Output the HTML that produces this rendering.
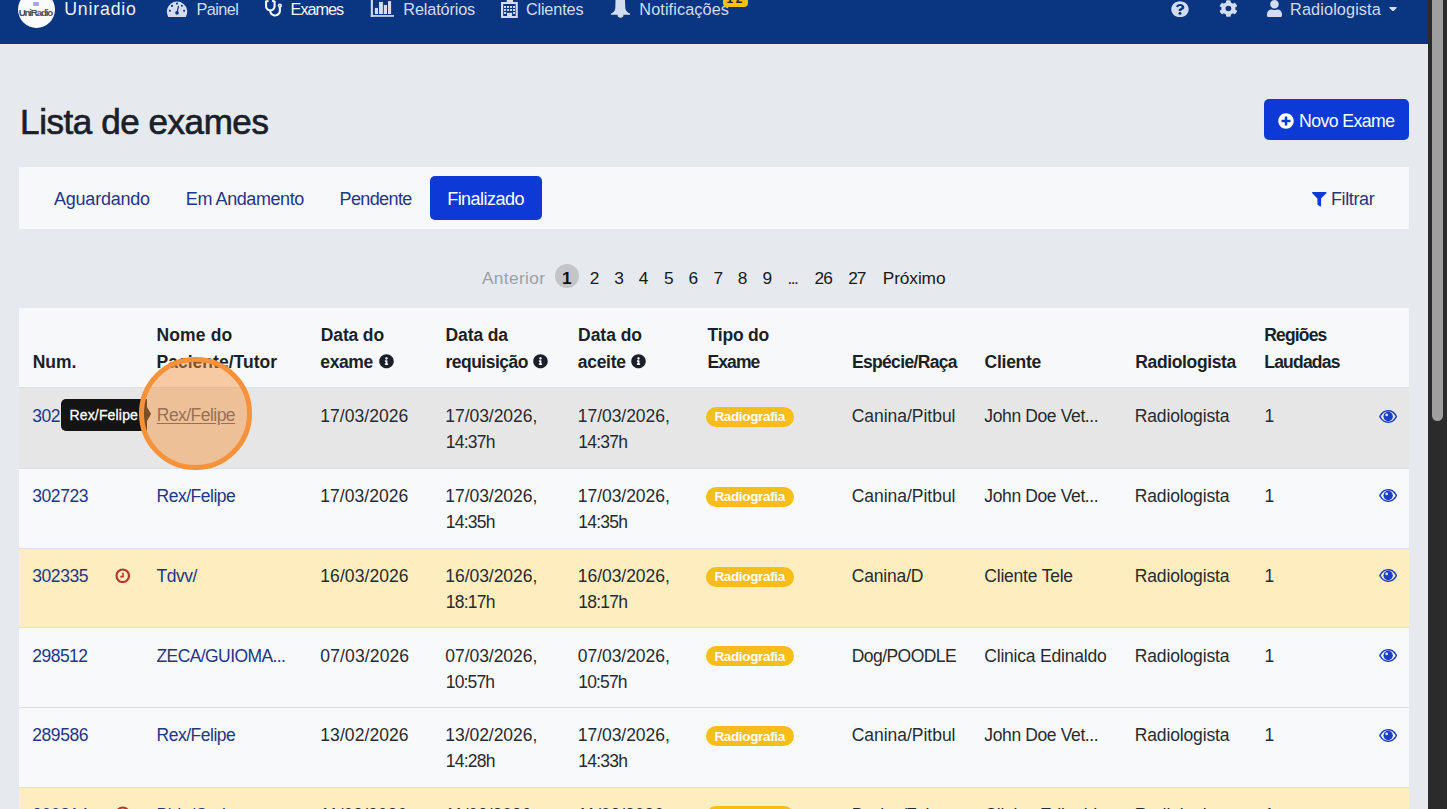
<!DOCTYPE html>
<html><head><meta charset="utf-8"><title>Lista de exames</title>
<style>
html,body{margin:0;padding:0;}
body{width:1447px;height:809px;overflow:hidden;position:relative;background:#e6e9ee;font-family:"Liberation Sans",sans-serif;}
.t{position:absolute;white-space:nowrap;}
.i{position:absolute;display:block;}
</style></head><body>
<div style="position:absolute;left:0;top:0;width:1428px;height:43.5px;background:#0a3580"></div>
<div style="position:absolute;left:18px;top:-9px;width:37px;height:37px;border-radius:50%;background:#fafbfc"></div>
<div style="position:absolute;left:33px;top:2px;width:5.5px;height:4.3px;border-radius:1px;background:#a5a8e6"></div>
<div class="t" style="left:18.70px;top:6.40px;font-size:9.8px;line-height:13px;color:#4d4d4d;letter-spacing:-1.202px;font-weight:700;">UniRadio</div>
<div class="t" style="left:64.20px;top:-1.63px;font-size:17.7px;line-height:23px;color:#eef2fa;letter-spacing:0.841px;">Uniradio</div>
<svg class="i" style="left:160px;top:0;width:35px;height:22px" viewBox="160 0 35 22"><path fill="#d3dcf0" d="M168.3,16.9 A10.2,10.2 0 1 1 185.8,16.9 Z"/><g fill="#0a3580"><circle cx="177" cy="3.6" r="1.05"/><circle cx="172" cy="5.9" r="1.05"/><circle cx="181.9" cy="5.8" r="1.05"/><circle cx="169.9" cy="10.7" r="1.05"/><circle cx="184.1" cy="10.7" r="1.05"/><circle cx="177" cy="12.9" r="1.8"/></g><path d="M177,12.9 L178.5,6.3" stroke="#0a3580" stroke-width="1.2" stroke-linecap="round"/></svg>
<div class="t" style="left:196.50px;top:-1.25px;font-size:16.3px;line-height:21px;color:#d3dcf0;letter-spacing:-0.603px;">Painel</div>
<svg class="i" style="left:265px;top:0px;width:17px;height:16.5px" viewBox="0 0 512 512" preserveAspectRatio="none"><path fill="#f4f6fb" d="M447.1 112c-34.2.5-62.3 28.4-63 62.6-.5 24.3 12.5 45.6 32 56.8V344c0 57.3-50.2 104-112 104-60 0-109.2-44.1-111.9-99.2C265 333.8 320 269.2 320 192V36.6c0-11.4-8.1-21.3-19.3-23.5L237.8.5c-13-2.6-25.6 5.8-28.2 18.8L206.4 35c-2.6 13 5.8 25.6 18.8 28.2l30.7 6.1v121.4c0 52.9-42.2 96.7-95.1 97.2-53.4.5-96.9-42.7-96.9-96V69.4l30.7-6.1c13-2.6 21.4-15.2 18.8-28.2l-3.1-15.7C107.7 6.4 95.1-2 82.1.6L19.3 13C8.1 15.3 0 25.1 0 36.6V192c0 77.3 55.1 142 128.1 156.8C130.7 439.2 208.6 512 304 512c97 0 176-75.4 176-168V231.4c19.1-11.1 32-31.7 32-55.4 0-35.7-29.2-64.5-64.9-64zm.9 80c-8.8 0-16-7.2-16-16s7.2-16 16-16 16 7.2 16 16-7.2 16-16 16z"/></svg>
<div class="t" style="left:290.60px;top:-1.25px;font-size:16.3px;line-height:21px;color:#f4f6fb;letter-spacing:-1.035px;">Exames</div>
<svg class="i" style="left:365px;top:0;width:35px;height:22px" viewBox="365 0 35 22"><g fill="#d3dcf0"><rect x="370.8" y="-1" width="2.1" height="17.8"/><rect x="370.8" y="15.1" width="23.1" height="1.7"/><rect x="374.9" y="7.9" width="3.1" height="6.1"/><rect x="379" y="1.9" width="3.9" height="12.1"/><rect x="383.8" y="5" width="3.2" height="9"/><rect x="388" y="1.1" width="3.1" height="12.9"/></g></svg>
<div class="t" style="left:403.30px;top:-1.25px;font-size:16.3px;line-height:21px;color:#d3dcf0;letter-spacing:-0.154px;">Relatórios</div>
<svg class="i" style="left:495px;top:0;width:30px;height:22px" viewBox="495 0 30 22"><g fill="#d3dcf0"><path fill-rule="evenodd" d="M501,1.9 H517.8 V18.1 H501 Z M503.2,4.1 V16 H515.7 V4.1 Z"/><rect x="506.7" y="-1" width="6.3" height="4.5"/><rect x="504" y="6" width="2.1" height="1.9"/><rect x="507" y="6" width="2.1" height="1.9"/><rect x="510" y="6" width="2.1" height="1.9"/><rect x="513" y="6" width="2.1" height="1.9"/><rect x="504" y="9" width="2.1" height="1.9"/><rect x="507" y="9" width="2.1" height="1.9"/><rect x="510" y="9" width="2.1" height="1.9"/><rect x="513" y="9" width="2.1" height="1.9"/><rect x="504" y="12" width="2.1" height="1.9"/><rect x="513" y="12" width="2.1" height="1.9"/><rect x="507" y="12.8" width="5.1" height="3.3"/></g></svg>
<div class="t" style="left:525.90px;top:-1.25px;font-size:16.3px;line-height:21px;color:#d3dcf0;letter-spacing:-0.170px;">Clientes</div>
<svg class="i" style="left:605px;top:0;width:35px;height:22px" viewBox="605 0 35 22"><path fill="#d3dcf0" d="M615.6,-2 H624.9 L625.3,8 C625.6,11 627.6,12.6 630,13.6 V14.7 H611 V13.6 C613.4,12.6 615.1,11 615.3,8 Z M617.5,14.7 H623.5 A3,3 0 0 1 617.5,14.7 Z"/></svg>
<div class="t" style="left:639.30px;top:-1.25px;font-size:16.3px;line-height:21px;color:#d3dcf0;letter-spacing:0.092px;">Notificações</div>
<div style="position:absolute;left:723px;top:-11px;width:24.5px;height:18px;border-radius:4px;background:#fcc10f"></div>
<div class="t" style="left:726.50px;top:-8.66px;font-size:12px;line-height:16px;color:#212529;letter-spacing:2.456px;font-weight:700;">12</div>
<svg class="i" style="left:1170.8px;top:0.5px;width:18px;height:16.5px" viewBox="0 0 512 512" preserveAspectRatio="none"><path fill="#d3dcf0" d="M504 256c0 136.997-111.043 248-248 248S8 392.997 8 256C8 119.083 119.043 8 256 8s248 111.083 248 248zM262.655 90c-54.497 0-89.255 22.957-116.549 63.758-3.536 5.286-2.353 12.415 2.715 16.258l34.699 26.31c5.205 3.947 12.621 3.008 16.665-2.122 17.864-22.658 30.113-35.797 57.303-35.797 20.429 0 45.698 13.148 45.698 32.958 0 14.976-12.363 22.667-32.534 33.976C247.128 238.528 216 254.941 216 296v4c0 6.627 5.373 12 12 12h56c6.627 0 12-5.373 12-12v-1.333c0-28.462 83.186-29.647 83.186-106.667 0-58.002-60.165-102-116.531-102zM256 338c-25.365 0-46 20.635-46 46 0 25.364 20.635 46 46 46s46-20.636 46-46c0-25.365-20.635-46-46-46z"/></svg>
<svg class="i" style="left:1218.6px;top:0px;width:18.8px;height:17px" viewBox="0 0 512 512" preserveAspectRatio="none"><path fill="#d3dcf0" d="M487.4 315.7l-42.6-24.6c4.3-23.2 4.3-47 0-70.2l42.6-24.6c4.9-2.8 7.1-8.6 5.5-14-11.1-35.6-30-67.8-54.7-94.6-3.8-4.1-10-5.1-14.8-2.3L380.8 110c-17.9-15.4-38.5-27.3-60.8-35.1V25.8c0-5.6-3.9-10.5-9.4-11.7-36.7-8.2-74.3-7.8-109.2 0-5.500 1.2-9.4 6.1-9.4 11.7V75c-22.2 7.9-42.8 19.8-60.8 35.1L88.7 85.5c-4.9-2.8-11-1.9-14.8 2.3-24.7 26.7-43.6 58.9-54.7 94.6-1.7 5.4.6 11.2 5.5 14L67.3 221c-4.3 23.2-4.3 47 0 70.2l-42.6 24.6c-4.9 2.8-7.1 8.6-5.5 14 11.1 35.6 30 67.8 54.7 94.6 3.8 4.1 10 5.1 14.8 2.3l42.6-24.6c17.9 15.4 38.5 27.3 60.8 35.1v49.2c0 5.6 3.9 10.5 9.4 11.7 36.7 8.2 74.3 7.8 109.2 0 5.5-1.2 9.4-6.1 9.4-11.7v-49.2c22.2-7.9 42.8-19.8 60.8-35.1l42.6 24.6c4.9 2.8 11 1.9 14.8-2.3 24.7-26.7 43.6-58.9 54.7-94.6 1.5-5.5-.7-11.3-5.6-14.1zM256 336c-44.1 0-80-35.9-80-80s35.9-80 80-80 80 35.9 80 80-35.9 80-80 80z"/></svg>
<svg class="i" style="left:1266.5px;top:0px;width:15px;height:17px" viewBox="0 0 448 512" preserveAspectRatio="none"><path fill="#d3dcf0" d="M224 256c70.7 0 128-57.3 128-128S294.7 0 224 0 96 57.3 96 128s57.3 128 128 128zm89.6 32h-16.7c-22.2 10.2-46.9 16-72.9 16s-50.6-5.8-72.9-16h-16.7C60.2 288 0 348.2 0 422.4V464c0 26.5 21.5 48 48 48h352c26.5 0 48-21.5 48-48v-41.6c0-74.2-60.2-134.4-134.4-134.4z"/></svg>
<div class="t" style="left:1290.10px;top:-1.25px;font-size:16.3px;line-height:21px;color:#d3dcf0;letter-spacing:0.099px;">Radiologista</div>
<svg class="i" style="left:1389px;top:6.5px;width:8px;height:4.5px" viewBox="0 192 320 172" preserveAspectRatio="none"><path fill="#d3dcf0" d="M31.3 192h257.3c17.8 0 26.7 21.5 14.1 34.1L174.1 354.8c-7.8 7.8-20.5 7.8-28.3 0L17.2 226.1C4.6 213.5 13.5 192 31.3 192z"/></svg>
<div class="t" style="left:20.10px;top:98.87px;font-size:35px;line-height:46px;color:#1b1f2a;letter-spacing:-0.434px;-webkit-text-stroke:0.7px #1b1f2a;">Lista de exames</div>
<div style="position:absolute;left:1264px;top:99px;width:145px;height:41px;border-radius:5px;background:#0d3ad4"></div>
<svg class="i" style="left:1278px;top:112.5px;width:16px;height:16px" viewBox="0 0 512 512" preserveAspectRatio="none"><path fill="#ffffff" d="M256 8C119 8 8 119 8 256s111 248 248 248 248-111 248-248S393 8 256 8zm144 276c0 6.6-5.4 12-12 12h-92v92c0 6.6-5.4 12-12 12h-56c-6.6 0-12-5.4-12-12v-92h-92c-6.6 0-12-5.4-12-12v-56c0-6.6 5.4-12 12-12h92v-92c0-6.6 5.4-12 12-12h56c6.6 0 12 5.4 12 12v92h92c6.6 0 12 5.4 12 12v56z"/></svg>
<div class="t" style="left:1299.00px;top:110.17px;font-size:17.7px;line-height:23px;color:#ffffff;letter-spacing:-0.581px;">Novo Exame</div>
<div style="position:absolute;left:19px;top:167px;width:1390px;height:61.5px;background:#f7f8fa"></div>
<div class="t" style="left:54.00px;top:188.06px;font-size:18px;line-height:23px;color:#1e3687;letter-spacing:-0.220px;">Aguardando</div>
<div class="t" style="left:185.80px;top:188.06px;font-size:18px;line-height:23px;color:#1e3687;letter-spacing:-0.415px;">Em Andamento</div>
<div class="t" style="left:339.50px;top:188.06px;font-size:18px;line-height:23px;color:#1e3687;letter-spacing:-0.611px;">Pendente</div>
<div style="position:absolute;left:430px;top:176px;width:112px;height:43.5px;border-radius:5px;background:#0d3ad4"></div>
<div class="t" style="left:447.20px;top:188.06px;font-size:18px;line-height:23px;color:#ffffff;letter-spacing:-0.538px;">Finalizado</div>
<svg class="i" style="left:1312px;top:192px;width:14.5px;height:14.5px" viewBox="0 0 512 512" preserveAspectRatio="none"><path fill="#0d3ad4" d="M487.976 0H24.028C2.71 0-8.047 25.866 7.058 40.971L192 225.941V432c0 7.831 3.821 15.17 10.237 19.662l80 55.98C298.02 518.69 320 507.493 320 487.98V225.941l184.947-184.97C520.021 25.896 509.338 0 487.976 0z"/></svg>
<div class="t" style="left:1331.00px;top:188.06px;font-size:18px;line-height:23px;color:#1e3687;letter-spacing:-0.382px;">Filtrar</div>
<div class="t" style="left:482.00px;top:267.01px;font-size:17.3px;line-height:22px;color:#9aa0a8;letter-spacing:0.345px;">Anterior</div>
<div style="position:absolute;left:555px;top:264px;width:24px;height:24px;border-radius:50%;background:#c3c5c9"></div>
<div class="t" style="left:562.00px;top:267.01px;font-size:17.3px;line-height:22px;color:#111;letter-spacing:-0.350px;font-weight:700;">1</div>
<div class="t" style="left:589.80px;top:267.01px;font-size:17.3px;line-height:22px;color:#15191f;letter-spacing:-0.350px;">2</div>
<div class="t" style="left:614.30px;top:267.01px;font-size:17.3px;line-height:22px;color:#15191f;letter-spacing:-0.350px;">3</div>
<div class="t" style="left:638.70px;top:267.01px;font-size:17.3px;line-height:22px;color:#15191f;letter-spacing:-0.350px;">4</div>
<div class="t" style="left:664.10px;top:267.01px;font-size:17.3px;line-height:22px;color:#15191f;letter-spacing:-0.350px;">5</div>
<div class="t" style="left:688.50px;top:267.01px;font-size:17.3px;line-height:22px;color:#15191f;letter-spacing:-0.350px;">6</div>
<div class="t" style="left:713.50px;top:267.01px;font-size:17.3px;line-height:22px;color:#15191f;letter-spacing:-0.350px;">7</div>
<div class="t" style="left:737.80px;top:267.01px;font-size:17.3px;line-height:22px;color:#15191f;letter-spacing:-0.350px;">8</div>
<div class="t" style="left:762.40px;top:267.01px;font-size:17.3px;line-height:22px;color:#15191f;letter-spacing:-0.350px;">9</div>
<div class="t" style="left:787.50px;top:267.01px;font-size:17.3px;line-height:22px;color:#15191f;letter-spacing:-1.555px;">...</div>
<div class="t" style="left:814.50px;top:267.01px;font-size:17.3px;line-height:22px;color:#15191f;letter-spacing:-0.838px;">26</div>
<div class="t" style="left:848.30px;top:267.01px;font-size:17.3px;line-height:22px;color:#15191f;letter-spacing:-1.038px;">27</div>
<div class="t" style="left:882.80px;top:267.01px;font-size:17.3px;line-height:22px;color:#15191f;letter-spacing:-0.109px;">Próximo</div>
<div style="position:absolute;left:19px;top:307.5px;width:1390px;height:79.7px;background:#f7f8fa"></div>
<div class="t" style="left:32.70px;top:350.64px;font-size:17.5px;line-height:23px;color:#1b1f28;letter-spacing:-0.017px;font-weight:700;">Num.</div>
<div class="t" style="left:156.50px;top:324.14px;font-size:17.5px;line-height:23px;color:#1b1f28;letter-spacing:0.139px;font-weight:700;">Nome do</div>
<div class="t" style="left:156.50px;top:350.64px;font-size:17.5px;line-height:23px;color:#1b1f28;letter-spacing:0.026px;font-weight:700;">Paciente/Tutor</div>
<div class="t" style="left:320.80px;top:324.14px;font-size:17.5px;line-height:23px;color:#1b1f28;letter-spacing:-0.145px;font-weight:700;">Data do</div>
<div class="t" style="left:320.30px;top:350.64px;font-size:17.5px;line-height:23px;color:#1b1f28;letter-spacing:-0.374px;font-weight:700;">exame</div>
<div class="t" style="left:445.50px;top:324.14px;font-size:17.5px;line-height:23px;color:#1b1f28;letter-spacing:-0.105px;font-weight:700;">Data da</div>
<div class="t" style="left:445.50px;top:350.64px;font-size:17.5px;line-height:23px;color:#1b1f28;letter-spacing:-0.515px;font-weight:700;">requisição</div>
<div class="t" style="left:578.10px;top:324.14px;font-size:17.5px;line-height:23px;color:#1b1f28;letter-spacing:-0.045px;font-weight:700;">Data do</div>
<div class="t" style="left:577.80px;top:350.64px;font-size:17.5px;line-height:23px;color:#1b1f28;letter-spacing:-0.302px;font-weight:700;">aceite</div>
<div class="t" style="left:707.50px;top:324.14px;font-size:17.5px;line-height:23px;color:#1b1f28;letter-spacing:-0.177px;font-weight:700;">Tipo do</div>
<div class="t" style="left:707.50px;top:350.64px;font-size:17.5px;line-height:23px;color:#1b1f28;letter-spacing:-0.909px;font-weight:700;">Exame</div>
<div class="t" style="left:851.90px;top:350.64px;font-size:17.5px;line-height:23px;color:#1b1f28;letter-spacing:-0.653px;font-weight:700;">Espécie/Raça</div>
<div class="t" style="left:984.60px;top:350.64px;font-size:17.5px;line-height:23px;color:#1b1f28;letter-spacing:-0.274px;font-weight:700;">Cliente</div>
<div class="t" style="left:1135.30px;top:350.64px;font-size:17.5px;line-height:23px;color:#1b1f28;letter-spacing:-0.366px;font-weight:700;">Radiologista</div>
<div class="t" style="left:1264.30px;top:324.14px;font-size:17.5px;line-height:23px;color:#1b1f28;letter-spacing:-0.846px;font-weight:700;">Regiões</div>
<div class="t" style="left:1264.30px;top:350.64px;font-size:17.5px;line-height:23px;color:#1b1f28;letter-spacing:-0.799px;font-weight:700;">Laudadas</div>
<svg class="i" style="left:378.9px;top:354px;width:15px;height:14.5px" viewBox="0 0 512 512" preserveAspectRatio="none"><path fill="#1b1f28" d="M256 8C119.043 8 8 119.083 8 256c0 136.997 111.043 248 248 248s248-111.003 248-248C504 119.083 392.957 8 256 8zm0 110c23.196 0 42 18.804 42 42s-18.804 42-42 42-42-18.804-42-42 18.804-42 42-42zm56 254c0 6.627-5.373 12-12 12h-88c-6.627 0-12-5.373-12-12v-24c0-6.627 5.373-12 12-12h12v-64h-12c-6.627 0-12-5.373-12-12v-24c0-6.627 5.373-12 12-12h64c6.627 0 12 5.373 12 12v100h12c6.627 0 12 5.373 12 12v24z"/></svg>
<svg class="i" style="left:533.1px;top:354px;width:15px;height:14.5px" viewBox="0 0 512 512" preserveAspectRatio="none"><path fill="#1b1f28" d="M256 8C119.043 8 8 119.083 8 256c0 136.997 111.043 248 248 248s248-111.003 248-248C504 119.083 392.957 8 256 8zm0 110c23.196 0 42 18.804 42 42s-18.804 42-42 42-42-18.804-42-42 18.804-42 42-42zm56 254c0 6.627-5.373 12-12 12h-88c-6.627 0-12-5.373-12-12v-24c0-6.627 5.373-12 12-12h12v-64h-12c-6.627 0-12-5.373-12-12v-24c0-6.627 5.373-12 12-12h64c6.627 0 12 5.373 12 12v100h12c6.627 0 12 5.373 12 12v24z"/></svg>
<svg class="i" style="left:631px;top:354px;width:15px;height:14.5px" viewBox="0 0 512 512" preserveAspectRatio="none"><path fill="#1b1f28" d="M256 8C119.043 8 8 119.083 8 256c0 136.997 111.043 248 248 248s248-111.003 248-248C504 119.083 392.957 8 256 8zm0 110c23.196 0 42 18.804 42 42s-18.804 42-42 42-42-18.804-42-42 18.804-42 42-42zm56 254c0 6.627-5.373 12-12 12h-88c-6.627 0-12-5.373-12-12v-24c0-6.627 5.373-12 12-12h12v-64h-12c-6.627 0-12-5.373-12-12v-24c0-6.627 5.373-12 12-12h64c6.627 0 12 5.373 12 12v100h12c6.627 0 12 5.373 12 12v24z"/></svg>
<div style="position:absolute;left:19px;top:387.2px;width:1390px;height:80.60px;background:#e6e6e6;border-top:1px solid #dddfe2;box-sizing:border-box"></div>
<div class="t" style="left:32.20px;top:405.24px;font-size:17.5px;line-height:23px;color:#1e3687;letter-spacing:-0.420px;">302723</div>
<div class="t" style="left:320.30px;top:405.24px;font-size:17.5px;line-height:23px;color:#272b31;letter-spacing:0.035px;">17/03/2026</div>
<div class="t" style="left:445.30px;top:405.24px;font-size:17.5px;line-height:23px;color:#272b31;letter-spacing:-0.045px;">17/03/2026,</div>
<div class="t" style="left:445.80px;top:431.24px;font-size:17.5px;line-height:23px;color:#272b31;letter-spacing:-0.767px;">14:37h</div>
<div class="t" style="left:577.80px;top:405.24px;font-size:17.5px;line-height:23px;color:#272b31;letter-spacing:-0.045px;">17/03/2026,</div>
<div class="t" style="left:578.30px;top:431.24px;font-size:17.5px;line-height:23px;color:#272b31;letter-spacing:-0.767px;">14:37h</div>
<div style="position:absolute;left:705.8px;top:407.00px;width:88.5px;height:20px;border-radius:10px;background:#f9bd1a"></div>
<div class="t" style="left:714.40px;top:408.42px;font-size:13.5px;line-height:18px;color:#ffffff;letter-spacing:-0.346px;font-weight:700;">Radiografia</div>
<div class="t" style="left:851.70px;top:405.24px;font-size:17.5px;line-height:23px;color:#272b31;letter-spacing:-0.024px;">Canina/Pitbul</div>
<div class="t" style="left:984.30px;top:405.24px;font-size:17.5px;line-height:23px;color:#272b31;letter-spacing:-0.376px;">John Doe Vet...</div>
<div class="t" style="left:1134.80px;top:405.24px;font-size:17.5px;line-height:23px;color:#272b31;letter-spacing:-0.147px;">Radiologista</div>
<div class="t" style="left:1264.50px;top:405.24px;font-size:17.5px;line-height:23px;color:#272b31;letter-spacing:-0.350px;">1</div>
<svg class="i" style="left:1378.5px;top:409.50px;width:18.3px;height:13px" viewBox="0 0 18.3 13"><path d="M0.9,6.5 C3,2.2 6,0.8 9.15,0.8 C12.3,0.8 15.3,2.2 17.4,6.5 C15.3,10.8 12.3,12.2 9.15,12.2 C6,12.2 3,10.8 0.9,6.5 Z" fill="none" stroke="#1b3fc4" stroke-width="1.6"/><circle cx="9.15" cy="6.5" r="4.7" fill="#1b3fc4"/><circle cx="7.7" cy="4.9" r="1.35" fill="#f4f6ff" fill-opacity="0.9"/></svg>
<div style="position:absolute;left:19px;top:467.6px;width:1390px;height:80.50px;background:#f8f9fb;border-top:1px solid #dddfe2;box-sizing:border-box"></div>
<div class="t" style="left:32.20px;top:485.04px;font-size:17.5px;line-height:23px;color:#1e3687;letter-spacing:-0.420px;">302723</div>
<div class="t" style="left:156.50px;top:485.04px;font-size:17.5px;line-height:23px;color:#1e3687;letter-spacing:-0.483px;">Rex/Felipe</div>
<div class="t" style="left:320.30px;top:485.04px;font-size:17.5px;line-height:23px;color:#272b31;letter-spacing:0.035px;">17/03/2026</div>
<div class="t" style="left:445.30px;top:485.04px;font-size:17.5px;line-height:23px;color:#272b31;letter-spacing:-0.045px;">17/03/2026,</div>
<div class="t" style="left:445.80px;top:511.04px;font-size:17.5px;line-height:23px;color:#272b31;letter-spacing:-0.767px;">14:35h</div>
<div class="t" style="left:577.80px;top:485.04px;font-size:17.5px;line-height:23px;color:#272b31;letter-spacing:-0.045px;">17/03/2026,</div>
<div class="t" style="left:578.30px;top:511.04px;font-size:17.5px;line-height:23px;color:#272b31;letter-spacing:-0.767px;">14:35h</div>
<div style="position:absolute;left:705.8px;top:486.80px;width:88.5px;height:20px;border-radius:10px;background:#f9bd1a"></div>
<div class="t" style="left:714.40px;top:488.22px;font-size:13.5px;line-height:18px;color:#ffffff;letter-spacing:-0.346px;font-weight:700;">Radiografia</div>
<div class="t" style="left:851.70px;top:485.04px;font-size:17.5px;line-height:23px;color:#272b31;letter-spacing:-0.024px;">Canina/Pitbul</div>
<div class="t" style="left:984.30px;top:485.04px;font-size:17.5px;line-height:23px;color:#272b31;letter-spacing:-0.376px;">John Doe Vet...</div>
<div class="t" style="left:1134.80px;top:485.04px;font-size:17.5px;line-height:23px;color:#272b31;letter-spacing:-0.147px;">Radiologista</div>
<div class="t" style="left:1264.50px;top:485.04px;font-size:17.5px;line-height:23px;color:#272b31;letter-spacing:-0.350px;">1</div>
<svg class="i" style="left:1378.5px;top:489.30px;width:18.3px;height:13px" viewBox="0 0 18.3 13"><path d="M0.9,6.5 C3,2.2 6,0.8 9.15,0.8 C12.3,0.8 15.3,2.2 17.4,6.5 C15.3,10.8 12.3,12.2 9.15,12.2 C6,12.2 3,10.8 0.9,6.5 Z" fill="none" stroke="#1b3fc4" stroke-width="1.6"/><circle cx="9.15" cy="6.5" r="4.7" fill="#1b3fc4"/><circle cx="7.7" cy="4.9" r="1.35" fill="#f4f6ff" fill-opacity="0.9"/></svg>
<div style="position:absolute;left:19px;top:547.9px;width:1390px;height:79.60px;background:#feedbf;border-top:1px solid #dddfe2;box-sizing:border-box"></div>
<div class="t" style="left:32.20px;top:564.84px;font-size:17.5px;line-height:23px;color:#1e3687;letter-spacing:-0.420px;">302335</div>
<svg class="i" style="left:114.8px;top:567.55px;width:15.5px;height:15.5px" viewBox="0 0 16 16"><circle cx="8" cy="8" r="6.45" fill="none" stroke="#b8352d" stroke-width="2.2"/><path d="M8.3 5V8.9H5.5" fill="none" stroke="#b8352d" stroke-width="1.6"/></svg>
<div class="t" style="left:156.50px;top:564.84px;font-size:17.5px;line-height:23px;color:#1e3687;letter-spacing:-0.497px;">Tdvv/</div>
<div class="t" style="left:320.30px;top:564.84px;font-size:17.5px;line-height:23px;color:#272b31;letter-spacing:0.079px;">16/03/2026</div>
<div class="t" style="left:445.30px;top:564.84px;font-size:17.5px;line-height:23px;color:#272b31;letter-spacing:-0.045px;">16/03/2026,</div>
<div class="t" style="left:445.80px;top:590.84px;font-size:17.5px;line-height:23px;color:#272b31;letter-spacing:-0.767px;">18:17h</div>
<div class="t" style="left:577.80px;top:564.84px;font-size:17.5px;line-height:23px;color:#272b31;letter-spacing:-0.045px;">16/03/2026,</div>
<div class="t" style="left:578.30px;top:590.84px;font-size:17.5px;line-height:23px;color:#272b31;letter-spacing:-0.767px;">18:17h</div>
<div style="position:absolute;left:705.8px;top:566.60px;width:88.5px;height:20px;border-radius:10px;background:#f9bd1a"></div>
<div class="t" style="left:714.40px;top:568.02px;font-size:13.5px;line-height:18px;color:#ffffff;letter-spacing:-0.346px;font-weight:700;">Radiografia</div>
<div class="t" style="left:851.70px;top:564.84px;font-size:17.5px;line-height:23px;color:#272b31;letter-spacing:-0.165px;">Canina/D</div>
<div class="t" style="left:984.30px;top:564.84px;font-size:17.5px;line-height:23px;color:#272b31;letter-spacing:-0.211px;">Cliente Tele</div>
<div class="t" style="left:1134.80px;top:564.84px;font-size:17.5px;line-height:23px;color:#272b31;letter-spacing:-0.147px;">Radiologista</div>
<div class="t" style="left:1264.50px;top:564.84px;font-size:17.5px;line-height:23px;color:#272b31;letter-spacing:-0.350px;">1</div>
<svg class="i" style="left:1378.5px;top:569.10px;width:18.3px;height:13px" viewBox="0 0 18.3 13"><path d="M0.9,6.5 C3,2.2 6,0.8 9.15,0.8 C12.3,0.8 15.3,2.2 17.4,6.5 C15.3,10.8 12.3,12.2 9.15,12.2 C6,12.2 3,10.8 0.9,6.5 Z" fill="none" stroke="#1b3fc4" stroke-width="1.6"/><circle cx="9.15" cy="6.5" r="4.7" fill="#1b3fc4"/><circle cx="7.7" cy="4.9" r="1.35" fill="#f4f6ff" fill-opacity="0.9"/></svg>
<div style="position:absolute;left:19px;top:627.3px;width:1390px;height:80.30px;background:#f8f9fb;border-top:1px solid #dddfe2;box-sizing:border-box"></div>
<div class="t" style="left:32.20px;top:644.64px;font-size:17.5px;line-height:23px;color:#1e3687;letter-spacing:-0.499px;">298512</div>
<div class="t" style="left:156.50px;top:644.64px;font-size:17.5px;line-height:23px;color:#1e3687;letter-spacing:-0.592px;">ZECA/GUIOMA...</div>
<div class="t" style="left:320.30px;top:644.64px;font-size:17.5px;line-height:23px;color:#272b31;letter-spacing:0.135px;">07/03/2026</div>
<div class="t" style="left:445.30px;top:644.64px;font-size:17.5px;line-height:23px;color:#272b31;letter-spacing:-0.045px;">07/03/2026,</div>
<div class="t" style="left:445.80px;top:670.64px;font-size:17.5px;line-height:23px;color:#272b31;letter-spacing:-0.846px;">10:57h</div>
<div class="t" style="left:577.80px;top:644.64px;font-size:17.5px;line-height:23px;color:#272b31;letter-spacing:-0.045px;">07/03/2026,</div>
<div class="t" style="left:578.30px;top:670.64px;font-size:17.5px;line-height:23px;color:#272b31;letter-spacing:-0.847px;">10:57h</div>
<div style="position:absolute;left:705.8px;top:646.40px;width:88.5px;height:20px;border-radius:10px;background:#f9bd1a"></div>
<div class="t" style="left:714.40px;top:647.82px;font-size:13.5px;line-height:18px;color:#ffffff;letter-spacing:-0.346px;font-weight:700;">Radiografia</div>
<div class="t" style="left:851.70px;top:644.64px;font-size:17.5px;line-height:23px;color:#272b31;letter-spacing:-0.544px;">Dog/POODLE</div>
<div class="t" style="left:984.30px;top:644.64px;font-size:17.5px;line-height:23px;color:#272b31;letter-spacing:-0.206px;">Clinica Edinaldo</div>
<div class="t" style="left:1134.80px;top:644.64px;font-size:17.5px;line-height:23px;color:#272b31;letter-spacing:-0.147px;">Radiologista</div>
<div class="t" style="left:1264.50px;top:644.64px;font-size:17.5px;line-height:23px;color:#272b31;letter-spacing:-0.350px;">1</div>
<svg class="i" style="left:1378.5px;top:648.90px;width:18.3px;height:13px" viewBox="0 0 18.3 13"><path d="M0.9,6.5 C3,2.2 6,0.8 9.15,0.8 C12.3,0.8 15.3,2.2 17.4,6.5 C15.3,10.8 12.3,12.2 9.15,12.2 C6,12.2 3,10.8 0.9,6.5 Z" fill="none" stroke="#1b3fc4" stroke-width="1.6"/><circle cx="9.15" cy="6.5" r="4.7" fill="#1b3fc4"/><circle cx="7.7" cy="4.9" r="1.35" fill="#f4f6ff" fill-opacity="0.9"/></svg>
<div style="position:absolute;left:19px;top:707.4px;width:1390px;height:80.00px;background:#f8f9fb;border-top:1px solid #dddfe2;box-sizing:border-box"></div>
<div class="t" style="left:32.20px;top:724.44px;font-size:17.5px;line-height:23px;color:#1e3687;letter-spacing:-0.420px;">289586</div>
<div class="t" style="left:156.50px;top:724.44px;font-size:17.5px;line-height:23px;color:#1e3687;letter-spacing:-0.483px;">Rex/Felipe</div>
<div class="t" style="left:320.30px;top:724.44px;font-size:17.5px;line-height:23px;color:#272b31;letter-spacing:0.079px;">13/02/2026</div>
<div class="t" style="left:445.30px;top:724.44px;font-size:17.5px;line-height:23px;color:#272b31;letter-spacing:-0.045px;">13/02/2026,</div>
<div class="t" style="left:445.80px;top:750.44px;font-size:17.5px;line-height:23px;color:#272b31;letter-spacing:-0.767px;">14:28h</div>
<div class="t" style="left:577.80px;top:724.44px;font-size:17.5px;line-height:23px;color:#272b31;letter-spacing:-0.045px;">17/03/2026,</div>
<div class="t" style="left:578.30px;top:750.44px;font-size:17.5px;line-height:23px;color:#272b31;letter-spacing:-0.767px;">14:33h</div>
<div style="position:absolute;left:705.8px;top:726.20px;width:88.5px;height:20px;border-radius:10px;background:#f9bd1a"></div>
<div class="t" style="left:714.40px;top:727.62px;font-size:13.5px;line-height:18px;color:#ffffff;letter-spacing:-0.346px;font-weight:700;">Radiografia</div>
<div class="t" style="left:851.70px;top:724.44px;font-size:17.5px;line-height:23px;color:#272b31;letter-spacing:-0.024px;">Canina/Pitbul</div>
<div class="t" style="left:984.30px;top:724.44px;font-size:17.5px;line-height:23px;color:#272b31;letter-spacing:-0.376px;">John Doe Vet...</div>
<div class="t" style="left:1134.80px;top:724.44px;font-size:17.5px;line-height:23px;color:#272b31;letter-spacing:-0.147px;">Radiologista</div>
<div class="t" style="left:1264.50px;top:724.44px;font-size:17.5px;line-height:23px;color:#272b31;letter-spacing:-0.350px;">1</div>
<svg class="i" style="left:1378.5px;top:728.70px;width:18.3px;height:13px" viewBox="0 0 18.3 13"><path d="M0.9,6.5 C3,2.2 6,0.8 9.15,0.8 C12.3,0.8 15.3,2.2 17.4,6.5 C15.3,10.8 12.3,12.2 9.15,12.2 C6,12.2 3,10.8 0.9,6.5 Z" fill="none" stroke="#1b3fc4" stroke-width="1.6"/><circle cx="9.15" cy="6.5" r="4.7" fill="#1b3fc4"/><circle cx="7.7" cy="4.9" r="1.35" fill="#f4f6ff" fill-opacity="0.9"/></svg>
<div style="position:absolute;left:19px;top:787.2px;width:1390px;height:40.20px;background:#feedbf;border-top:1px solid #dddfe2;box-sizing:border-box"></div>
<div class="t" style="left:32.20px;top:804.24px;font-size:17.5px;line-height:23px;color:#1e3687;letter-spacing:-0.420px;">300814</div>
<svg class="i" style="left:114.8px;top:805.50px;width:15.5px;height:15.5px" viewBox="0 0 16 16"><circle cx="8" cy="8" r="6.45" fill="none" stroke="#b8352d" stroke-width="2.2"/><path d="M8.3 5V8.9H5.5" fill="none" stroke="#b8352d" stroke-width="1.6"/></svg>
<div class="t" style="left:156.50px;top:804.24px;font-size:17.5px;line-height:23px;color:#1e3687;letter-spacing:-0.325px;">Bidu/Carla</div>
<div class="t" style="left:320.30px;top:804.24px;font-size:17.5px;line-height:23px;color:#272b31;letter-spacing:0.056px;">11/03/2026</div>
<div class="t" style="left:445.30px;top:804.24px;font-size:17.5px;line-height:23px;color:#272b31;letter-spacing:-0.036px;">11/03/2026,</div>
<div class="t" style="left:445.80px;top:830.24px;font-size:17.5px;line-height:23px;color:#272b31;letter-spacing:-0.767px;">09:12h</div>
<div class="t" style="left:577.80px;top:804.24px;font-size:17.5px;line-height:23px;color:#272b31;letter-spacing:-0.036px;">11/03/2026,</div>
<div class="t" style="left:578.30px;top:830.24px;font-size:17.5px;line-height:23px;color:#272b31;letter-spacing:-0.767px;">09:12h</div>
<div style="position:absolute;left:705.8px;top:806.00px;width:88.5px;height:20px;border-radius:10px;background:#f9bd1a"></div>
<div class="t" style="left:714.40px;top:807.42px;font-size:13.5px;line-height:18px;color:#ffffff;letter-spacing:-0.346px;font-weight:700;">Radiografia</div>
<div class="t" style="left:851.70px;top:804.24px;font-size:17.5px;line-height:23px;color:#272b31;letter-spacing:-0.546px;">Bovino/Zebu</div>
<div class="t" style="left:984.30px;top:804.24px;font-size:17.5px;line-height:23px;color:#272b31;letter-spacing:-0.206px;">Clinica Edinaldo</div>
<div class="t" style="left:1134.80px;top:804.24px;font-size:17.5px;line-height:23px;color:#272b31;letter-spacing:-0.147px;">Radiologista</div>
<div class="t" style="left:1264.50px;top:804.24px;font-size:17.5px;line-height:23px;color:#272b31;letter-spacing:-0.350px;">1</div>
<svg class="i" style="left:1378.5px;top:808.50px;width:18.3px;height:13px" viewBox="0 0 18.3 13"><path d="M0.9,6.5 C3,2.2 6,0.8 9.15,0.8 C12.3,0.8 15.3,2.2 17.4,6.5 C15.3,10.8 12.3,12.2 9.15,12.2 C6,12.2 3,10.8 0.9,6.5 Z" fill="none" stroke="#1b3fc4" stroke-width="1.6"/><circle cx="9.15" cy="6.5" r="4.7" fill="#1b3fc4"/><circle cx="7.7" cy="4.9" r="1.35" fill="#f4f6ff" fill-opacity="0.9"/></svg>
<div class="t" style="left:156.80px;top:404.14px;font-size:17.5px;line-height:23px;color:#4a5470;letter-spacing:-0.539px;text-decoration:underline;text-underline-offset:2px;">Rex/Felipe</div>
<div style="position:absolute;left:61px;top:399px;width:86px;height:31.5px;border-radius:5px 0 0 5px;background:#141414"></div>
<div style="position:absolute;left:147px;top:407px;width:0;height:0;border-top:7.7px solid transparent;border-bottom:7.7px solid transparent;border-left:4px solid #141414"></div>
<div class="t" style="left:69.40px;top:405.95px;font-size:14px;line-height:18px;color:#ffffff;letter-spacing:0.176px;-webkit-text-stroke:0.3px #ffffff;">Rex/Felipe</div>
<div style="position:absolute;left:139px;top:357px;width:112.5px;height:112.5px;border-radius:50%;background:rgba(247,146,58,0.45);border:5.6px solid #f7923a;box-sizing:border-box"></div>
<div style="position:absolute;left:1428px;top:0;width:19px;height:809px;background:#2b2b2b"></div>
<div style="position:absolute;left:1432px;top:-10px;width:11px;height:431px;border-radius:6px;background:#9f9f9f"></div>
</body></html>
